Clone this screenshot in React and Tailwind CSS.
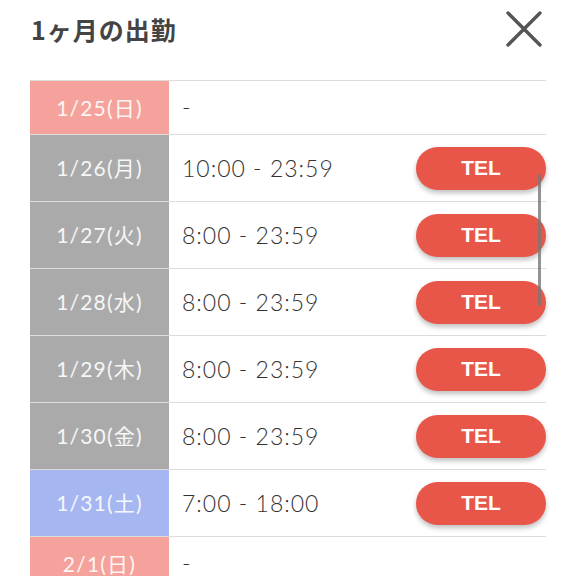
import React from 'react'

const rows = [
    { date: '1/25(日)', time: '-', kind: 'sun' },
    { date: '1/26(月)', time: '10:00 - 23:59', kind: 'day', tel: true },
    { date: '1/27(火)', time: '8:00 - 23:59', kind: 'day', tel: true },
    { date: '1/28(水)', time: '8:00 - 23:59', kind: 'day', tel: true },
    { date: '1/29(木)', time: '8:00 - 23:59', kind: 'day', tel: true },
    { date: '1/30(金)', time: '8:00 - 23:59', kind: 'day', tel: true },
    { date: '1/31(土)', time: '7:00 - 18:00', kind: 'sat', tel: true },
    { date: '2/1(日)', time: '-', kind: 'sun' },
]

const dateBg = {
    sun: 'bg-[#f4a29b]',
    day: 'bg-[#aaaaaa]',
    sat: 'bg-[#a6b6f1]',
}

const CloseIcon = () => (
    <svg width="36" height="36" viewBox="0 0 36 36" className="text-[#555]">
        <line x1="2" y1="2" x2="34" y2="34" stroke="currentColor" strokeWidth="3.4" strokeLinecap="round" />
        <line x1="34" y1="2" x2="2" y2="34" stroke="currentColor" strokeWidth="3.4" strokeLinecap="round" />
    </svg>
)

const App = () => {
    return (
        <div
            className="relative w-[576px] h-[576px] overflow-hidden bg-white"
            style={{ fontFamily: 'Lato, "Noto Sans CJK JP", sans-serif' }}
        >
            {/* Header */}
            <div className="flex items-center justify-between pl-[31px] pr-[34px] h-[60px]">
                <h2
                    className="text-[25px] font-bold text-[#444] tracking-[1px]"
                    style={{ fontFamily: '"Noto Sans CJK JP", sans-serif' }}
                >
                    1ヶ月の出勤
                </h2>
                <button className="mt-[-2px]">
                    <CloseIcon />
                </button>
            </div>

            {/* Schedule table */}
            <div className="mx-[30px] mt-[20px] border-t border-[#dcdcdc]">
                {rows.map((row) => (
                    <div key={row.date} className="flex border-b border-[#dcdcdc]">
                        <div
                            className={`w-[139px] shrink-0 flex items-center justify-center text-[21px] tracking-[1.2px] text-white/90 ${dateBg[row.kind]} ${row.tel ? 'h-[66px]' : 'h-[53px]'}`}
                        >
                            {row.date}
                        </div>
                        <div className="flex-1 flex items-center justify-between pl-[13px]">
                            <span className="text-[23px] font-light tracking-[1px] text-[#333]">{row.time}</span>
                            {row.tel && (
                                <button
                                    className="w-[130px] h-[43px] rounded-full bg-[#e8564a] text-white text-[21px] font-bold shadow-[0_3px_5px_rgba(0,0,0,0.25)]"
                                    style={{ fontFamily: '"Liberation Sans", Arial, sans-serif' }}
                                >
                                    TEL
                                </button>
                            )}
                        </div>
                    </div>
                ))}
            </div>

            {/* overlay scrollbar */}
            <div className="absolute left-[538px] top-[174px] w-[3px] h-[132px] rounded-full bg-[#777]/80" />
        </div>
    )
}

export default App
